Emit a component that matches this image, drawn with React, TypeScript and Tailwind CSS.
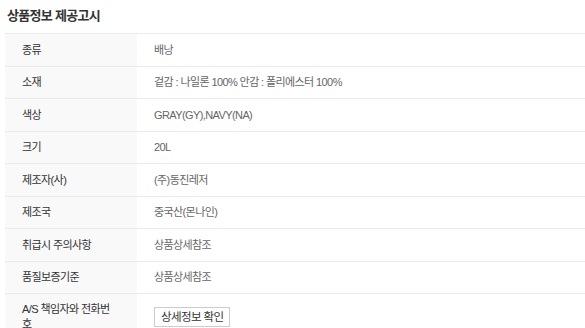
import React from 'react';

const rows = [
  { label: '종류', value: '배낭' },
  { label: '소재', value: '겉감 : 나일론 100% 안감 : 폴리에스터 100%' },
  { label: '색상', value: 'GRAY(GY),NAVY(NA)' },
  { label: '크기', value: '20L' },
  { label: '제조자(사)', value: '(주)동진레저' },
  { label: '제조국', value: '중국산(몬나인)' },
  { label: '취급시 주의사항', value: '상품상세참조' },
  { label: '품질보증기준', value: '상품상세참조' },
];

const font = { fontFamily: '"Liberation Sans", "Noto Sans CJK KR", sans-serif' };

const App = () => {
  return (
    <div className="w-[585px] h-[328px] overflow-hidden bg-white pl-[5px]" style={font}>
      <h2 className="h-[33px] pl-[2px] pt-[6px] text-[13px] font-bold tracking-[-0.7px] text-[#333] leading-[20px]">
        상품정보 제공고시
      </h2>
      <table className="w-[600px] table-fixed border-collapse border-t border-[#ebebeb] text-[11px] tracking-[-0.6px]">
        <colgroup>
          <col className="w-[132px]" />
          <col />
        </colgroup>
        <tbody>
          {rows.map((row, idx) => (
            <tr key={idx} className="h-[32.5px] border-b border-[#ebebeb]">
              <th className="bg-[#f9f9f9] pl-[17px] pr-[21px] text-left font-normal text-[#333] align-middle">
                {row.label}
              </th>
              <td className="pl-[17px] text-[#666] align-middle">{row.value}</td>
            </tr>
          ))}
          <tr className="h-[46px]">
            <th className="bg-[#f9f9f9] pl-[17px] pr-[21px] py-[8px] text-left font-normal text-[#333] leading-[15px] align-middle">
              A/S 책임자와 전화번호
            </th>
            <td className="pl-[17px] align-middle">
              <button className="h-[20px] border border-[#cccccc] bg-white px-[6px] text-[11.5px] text-[#333] leading-[18px]">
                상세정보 확인
              </button>
            </td>
          </tr>
        </tbody>
      </table>
    </div>
  );
};

export default App;
